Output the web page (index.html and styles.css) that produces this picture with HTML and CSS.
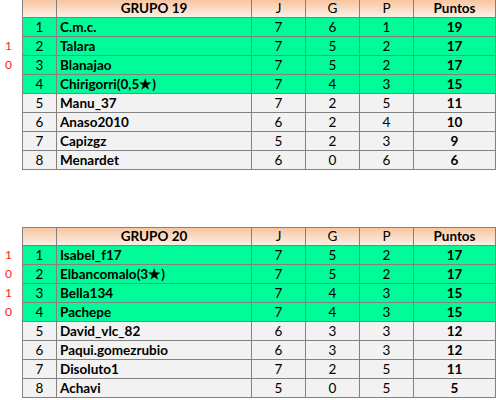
FILE: index.html
```html
<!DOCTYPE html>
<html>
<head>
<meta charset="utf-8">
<link rel="stylesheet" href="styles.css">
</head>
<body>
<div class="page">
  <section class="group group--first">
    <div class="marks">
      <span></span><span>1</span><span>0</span><span></span><span></span><span></span><span></span><span></span>
    </div>
    <div class="table">
      <div class="row head"><div class="cell"></div><div class="cell">GRUPO 19</div><div class="cell num">J</div><div class="cell num">G</div><div class="cell num">P</div><div class="cell pts">Puntos</div></div>
      <div class="row win"><div class="cell">1</div><div class="cell name">C.m.c.</div><div class="cell">7</div><div class="cell">6</div><div class="cell">1</div><div class="cell pts">19</div></div>
      <div class="row win"><div class="cell">2</div><div class="cell name">Talara</div><div class="cell">7</div><div class="cell">5</div><div class="cell">2</div><div class="cell pts">17</div></div>
      <div class="row win"><div class="cell">3</div><div class="cell name">Blanajao</div><div class="cell">7</div><div class="cell">5</div><div class="cell">2</div><div class="cell pts">17</div></div>
      <div class="row win"><div class="cell">4</div><div class="cell name">Chirigorri(0,5★)</div><div class="cell">7</div><div class="cell">4</div><div class="cell">3</div><div class="cell pts">15</div></div>
      <div class="row"><div class="cell">5</div><div class="cell name">Manu_37</div><div class="cell">7</div><div class="cell">2</div><div class="cell">5</div><div class="cell pts">11</div></div>
      <div class="row"><div class="cell">6</div><div class="cell name">Anaso2010</div><div class="cell">6</div><div class="cell">2</div><div class="cell">4</div><div class="cell pts">10</div></div>
      <div class="row"><div class="cell">7</div><div class="cell name">Capizgz</div><div class="cell">5</div><div class="cell">2</div><div class="cell">3</div><div class="cell pts">9</div></div>
      <div class="row"><div class="cell">8</div><div class="cell name">Menardet</div><div class="cell">6</div><div class="cell">0</div><div class="cell">6</div><div class="cell pts">6</div></div>
    </div>
  </section>

  <section class="group group--second">
    <div class="marks">
      <span>1</span><span>0</span><span>1</span><span>0</span><span></span><span></span><span></span><span></span>
    </div>
    <div class="table">
      <div class="row head"><div class="cell"></div><div class="cell">GRUPO 20</div><div class="cell num">J</div><div class="cell num">G</div><div class="cell num">P</div><div class="cell pts">Puntos</div></div>
      <div class="row win"><div class="cell">1</div><div class="cell name">Isabel_f17</div><div class="cell">7</div><div class="cell">5</div><div class="cell">2</div><div class="cell pts">17</div></div>
      <div class="row win"><div class="cell">2</div><div class="cell name">Elbancomalo(3★)</div><div class="cell">7</div><div class="cell">5</div><div class="cell">2</div><div class="cell pts">17</div></div>
      <div class="row win"><div class="cell">3</div><div class="cell name">Bella134</div><div class="cell">7</div><div class="cell">4</div><div class="cell">3</div><div class="cell pts">15</div></div>
      <div class="row win"><div class="cell">4</div><div class="cell name">Pachepe</div><div class="cell">7</div><div class="cell">4</div><div class="cell">3</div><div class="cell pts">15</div></div>
      <div class="row"><div class="cell">5</div><div class="cell name">David_vlc_82</div><div class="cell">6</div><div class="cell">3</div><div class="cell">3</div><div class="cell pts">12</div></div>
      <div class="row"><div class="cell">6</div><div class="cell name">Paqui.gomezrubio</div><div class="cell">6</div><div class="cell">3</div><div class="cell">3</div><div class="cell pts">12</div></div>
      <div class="row"><div class="cell">7</div><div class="cell name">Disoluto1</div><div class="cell">7</div><div class="cell">2</div><div class="cell">5</div><div class="cell pts">11</div></div>
      <div class="row"><div class="cell">8</div><div class="cell name">Achavi</div><div class="cell">5</div><div class="cell">0</div><div class="cell">5</div><div class="cell pts">5</div></div>
    </div>
  </section>
</div>
</body>
</html>
```

FILE: styles.css
```css
html, body {
  margin: 0;
  padding: 0;
  background: #ffffff;
}

.page {
  display: flex;
  flex-direction: column;
  gap: 57px;
  font-family: Lato, "Liberation Sans", sans-serif;
  font-size: 13.5px;
  color: #000;
}

.group {
  display: flex;
  align-items: flex-start;
}

.group--first {
  margin-top: -1px;
}

.marks {
  width: 22px;
  display: grid;
  grid-template-rows: repeat(8, 19px);
  padding-top: 18px;
  color: #ff1a1a;
  font-size: 12px;
}

.marks span {
  display: flex;
  align-items: center;
  justify-content: center;
  padding-left: 3px;
  padding-right: 8px;
}

.table {
  display: grid;
  grid-template-columns: 33px 194px 53px 53px 53px 81px;
  grid-template-rows: 17px repeat(8, 18px);
  gap: 1px;
  padding: 1px;
  background: #828282;
}

.row {
  display: contents;
}

.cell {
  display: flex;
  align-items: center;
  justify-content: center;
  background: #f2f2f2;
  padding-top: 1px;
  line-height: 1;
}

.row.win .cell {
  background: #00fc98;
}

.row.head .cell {
  background: linear-gradient(#f8c6a0, #fdefe6);
  font-weight: bold;
}

.row.head .cell.num {
  font-weight: normal;
}

.cell.name {
  justify-content: flex-start;
  padding-left: 3px;
  font-weight: bold;
}

.cell.pts {
  font-weight: bold;
}
```
